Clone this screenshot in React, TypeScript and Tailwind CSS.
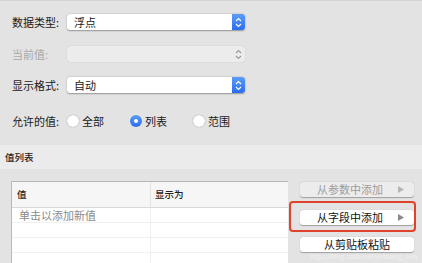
import React from 'react';

const font = { fontFamily: '"Noto Sans CJK SC", "Noto Sans", sans-serif' };

function Chevrons({ color }: { color: string }) {
  return (
    <svg width="7" height="11" viewBox="0 0 7 11" fill="none">
      <path d="M1 4 L3.5 1.5 L6 4" stroke={color} strokeWidth="1.1" />
      <path d="M1 7 L3.5 9.5 L6 7" stroke={color} strokeWidth="1.1" />
    </svg>
  );
}

function Select({ value, disabled }: { value?: string; disabled?: boolean }) {
  if (disabled) {
    return (
      <div className="flex h-[16px] w-[178px] items-center rounded-[3px] bg-[#ececec] shadow-[0_0_1px_rgba(0,0,0,0.25)]">
        <div className="flex-1" />
        <div className="flex w-[14px] items-center justify-center">
          <Chevrons color="#9a9a9a" />
        </div>
      </div>
    );
  }
  return (
    <div className="flex h-[16px] w-[178px] rounded-[3px] bg-white shadow-[0_0.5px_1.5px_rgba(0,0,0,0.35)]">
      <div className="flex-1 pl-[7px] text-[11px] leading-[16px] text-[#1a1a1a]">{value}</div>
      <div className="flex w-[13px] items-center justify-center rounded-r-[3px] bg-gradient-to-b from-[#5c9cf8] to-[#2b6cf0]">
        <Chevrons color="#ffffff" />
      </div>
    </div>
  );
}

function Radio({ label, checked }: { label: string; checked?: boolean }) {
  return (
    <div className="flex w-[63px] items-center gap-[3px]">
      {checked ? (
        <div className="flex h-[12px] w-[12px] items-center justify-center rounded-full bg-gradient-to-b from-[#5c9cf8] to-[#2b6cf0]">
          <div className="h-[4px] w-[4px] rounded-full bg-white" />
        </div>
      ) : (
        <div className="h-[12px] w-[12px] rounded-full bg-white shadow-[0_0_1px_rgba(0,0,0,0.5)]" />
      )}
      <span className="text-[11px] text-[#1a1a1a]">{label}</span>
    </div>
  );
}

function SideButton({ label, disabled, arrow }: { label: string; disabled?: boolean; arrow?: boolean }) {
  return (
    <div
      className={`relative flex h-[15px] w-[114px] items-center justify-center rounded-[3px] text-[11px] shadow-[0_0.5px_1px_rgba(0,0,0,0.3)] ${
        disabled ? 'bg-[#ececec] text-[#9c9c9c]' : 'bg-white text-[#111]'
      }`}
    >
      <span className={arrow ? 'pr-[14px]' : ''}>{label}</span>
      {arrow && (
        <svg className="absolute right-[10px]" width="6" height="7" viewBox="0 0 6 7">
          <path d="M0 0 L6 3.5 L0 7 Z" fill={disabled ? '#b5b5b5' : '#8a8a8a'} />
        </svg>
      )}
    </div>
  );
}

export default function App() {
  return (
    <div
      className="relative h-[263px] w-[422px] overflow-hidden border-t border-[#d4d4d4] bg-[#e3e3e3]"
      style={font}
    >
      {/* form rows */}
      <div className="mt-[13px] flex h-[16px] items-center">
        <div className="w-[67px] pl-[12px] text-[11px] text-[#1a1a1a]">数据类型:</div>
        <Select value="浮点" />
      </div>

      <div className="mt-[16px] flex h-[16px] items-center">
        <div className="w-[67px] pl-[12px] text-[11px] text-[#a9a9a9]">当前值:</div>
        <Select disabled />
      </div>

      <div className="mt-[15px] flex h-[16px] items-center">
        <div className="w-[67px] pl-[12px] text-[11px] text-[#1a1a1a]">显示格式:</div>
        <Select value="自动" />
      </div>

      <div className="mt-[20px] flex h-[16px] items-center">
        <div className="w-[67px] pl-[12px] text-[11px] text-[#1a1a1a]">允许的值:</div>
        <Radio label="全部" />
        <Radio label="列表" checked />
        <Radio label="范围" />
      </div>

      {/* section header */}
      <div className="mt-[16px] flex h-[24px] items-center bg-[#ebebeb] pl-[5px] text-[9.5px] font-medium text-[#222]">
        值列表
      </div>

      {/* list + buttons */}
      <div className="mt-[12px] flex pl-[11px]">
        <div className="h-[90px] w-[277px] border-l border-t border-[#b8b8b8] bg-white">
          <div className="flex h-[26px] border-b border-[#d9d9d9] bg-[#f6f6f6] text-[9.5px] font-medium text-[#222]">
            <div className="flex w-[139px] items-center border-r border-[#e2e2e2] pl-[5px]">值</div>
            <div className="flex flex-1 items-center pl-[4px]">显示为</div>
          </div>
          <div className="flex h-[15px] border-b border-[#f0f0f0]">
            <div className="w-[139px] border-r border-[#f0f0f0] pl-[7px] text-[11px] leading-[15px] text-[#8a8a8a]">
              单击以添加新值
            </div>
          </div>
          <div className="flex h-[15px] border-b border-[#f0f0f0]">
            <div className="w-[139px] border-r border-[#f0f0f0]" />
          </div>
          <div className="flex h-[15px] border-b border-[#f0f0f0]">
            <div className="w-[139px] border-r border-[#f0f0f0]" />
          </div>
          <div className="flex h-[15px]">
            <div className="w-[139px] border-r border-[#f0f0f0]" />
          </div>
        </div>

        <div className="ml-[12px] flex flex-col pt-[1px]">
          <SideButton label="从参数中添加" disabled arrow />
          <div className="relative mt-[13px]">
            <SideButton label="从字段中添加" arrow />
            <div className="pointer-events-none absolute -top-[9px] -bottom-[7px] -left-[11px] -right-[2px] rounded-[4px] border-2 border-[#e0432c]" />
          </div>
          <div className="mt-[12px]">
            <SideButton label="从剪贴板粘贴" />
          </div>
        </div>
      </div>

      <div
        className="absolute right-[4px] bottom-[2px] text-[7px] leading-[8px] text-white/50"
        style={{ fontFamily: '"Liberation Sans", sans-serif' }}
      >
        https://blog.csdn.net/yeshang_lady
      </div>
    </div>
  );
}
